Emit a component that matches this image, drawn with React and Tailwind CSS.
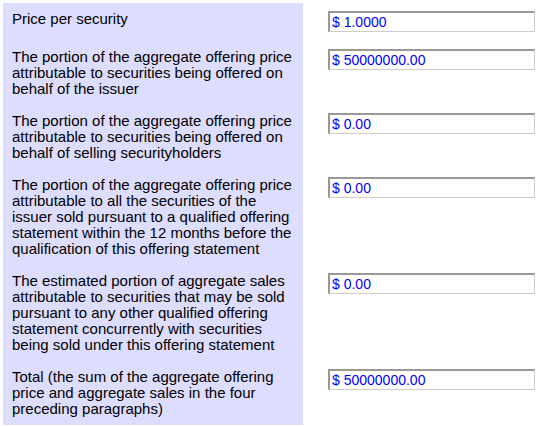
import React from 'react';

const ROWS = [
  { label: 'Price per security', value: '$ 1.0000' },
  {
    label: 'The portion of the aggregate offering price attributable to securities being offered on behalf of the issuer',
    value: '$ 50000000.00',
  },
  {
    label: 'The portion of the aggregate offering price attributable to securities being offered on behalf of selling securityholders',
    value: '$ 0.00',
  },
  {
    label: 'The portion of the aggregate offering price attributable to all the securities of the issuer sold pursuant to a qualified offering statement within the 12 months before the qualification of this offering statement',
    value: '$ 0.00',
  },
  {
    label: 'The estimated portion of aggregate sales attributable to securities that may be sold pursuant to any other qualified offering statement concurrently with securities being sold under this offering statement',
    value: '$ 0.00',
  },
  {
    label: 'Total (the sum of the aggregate offering price and aggregate sales in the four preceding paragraphs)',
    value: '$ 50000000.00',
  },
];

export default function App() {
  return (
    <div className="min-h-screen bg-white pt-[3px] pl-[3px] font-['Liberation_Sans',Arial,sans-serif] text-[15px] leading-4 text-black">
      <div className="grid grid-cols-[300px_1fr]">
        {ROWS.map(({ label, value }) => (
          <React.Fragment key={label}>
            <div className="bg-[#ddddff] pl-[9px] pr-[4px] py-2">{label}</div>
            <div className="pl-[25px] pt-2 pb-[9px]">
              <input
                readOnly
                value={value}
                className="block w-[207px] h-[21px] border-t-2 border-l-2 border-r border-b border-t-[#999] border-l-[#999] border-r-[#ccc] border-b-[#ccc] bg-white px-[2px] font-['Liberation_Sans',Arial,sans-serif] text-[14px] text-[#0000ff] outline-none"
              />
            </div>
          </React.Fragment>
        ))}
      </div>
    </div>
  );
}
